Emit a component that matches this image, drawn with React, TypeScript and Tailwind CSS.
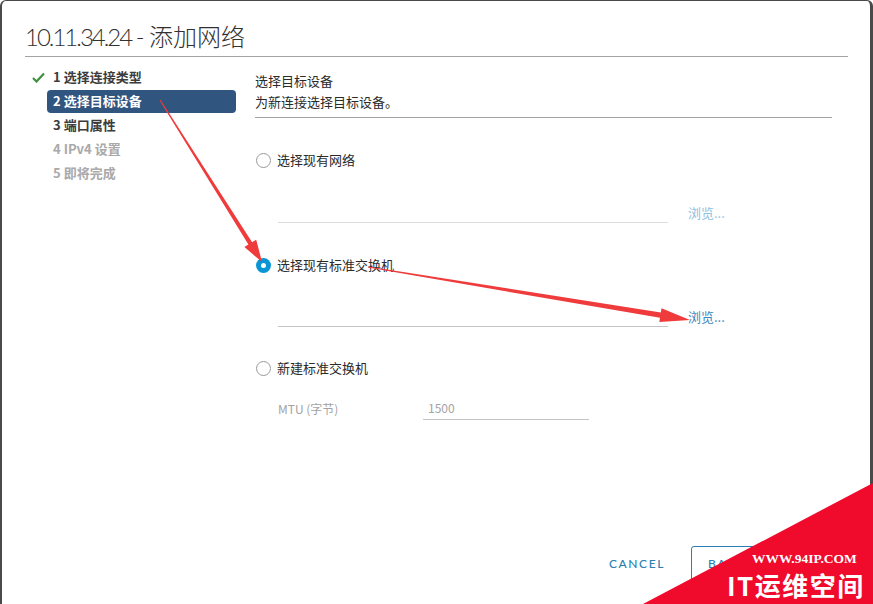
import type { ReactNode } from "react";

const cjk = "font-['Noto_Sans_CJK_SC','Noto_Sans',sans-serif]";

type Pt = [number, number];

// tapered shaft + head, returned as polygon points
const arrowPoints = (from: Pt, tip: Pt, headLen: number, headHalf: number, w0: number, w1: number) => {
  const dx = tip[0] - from[0];
  const dy = tip[1] - from[1];
  const len = Math.hypot(dx, dy);
  const ux = dx / len;
  const uy = dy / len;
  const px = -uy;
  const py = ux;
  const bx = tip[0] - ux * headLen;
  const by = tip[1] - uy * headLen;
  const pts: Pt[] = [
    [from[0] + px * w0, from[1] + py * w0],
    [bx + px * w1, by + py * w1],
    [bx + px * headHalf, by + py * headHalf],
    tip,
    [bx - px * headHalf, by - py * headHalf],
    [bx - px * w1, by - py * w1],
    [from[0] - px * w0, from[1] - py * w0],
  ];
  return pts.map((p) => `${p[0].toFixed(1)},${p[1].toFixed(1)}`).join(" ");
};

const steps = [
  { n: 1, label: "选择连接类型", state: "done" },
  { n: 2, label: "选择目标设备", state: "active" },
  { n: 3, label: "端口属性", state: "todo" },
  { n: 4, label: "IPv4 设置", state: "disabled" },
  { n: 5, label: "即将完成", state: "disabled" },
];

function Radio({ checked, children }: { checked?: boolean; children: ReactNode }) {
  return (
    <div className="flex h-[20px] items-center">
      {checked ? (
        <span className="ml-[1px] flex h-[15px] w-[15px] items-center justify-center rounded-full bg-[#0a96d4]">
          <span className="h-[5px] w-[5px] rounded-full bg-white" />
        </span>
      ) : (
        <span className="ml-[1px] h-[15px] w-[15px] rounded-full border border-[#9a9a9a] bg-white" />
      )}
      <span className="ml-[6px] text-[13px] text-[#2b2b2b]">{children}</span>
    </div>
  );
}

function BrowseRow({ enabled }: { enabled?: boolean }) {
  return (
    <div className="flex items-end pl-[23px]">
      <div
        className={
          "h-[22px] w-[390px] border-b " + (enabled ? "border-[#c4c4c4]" : "border-[#dcdcdc]")
        }
      />
      <span
        className={
          "ml-[20px] text-[13px] leading-[21px] " + (enabled ? "text-[#3a88c0]" : "text-[#8fbfdf]")
        }
      >
        浏览...
      </span>
    </div>
  );
}

export default function App() {
  return (
    <div className={"relative h-[604px] w-[873px] overflow-hidden bg-white " + cjk}>
      <div className="flex h-full flex-col rounded-t-[6px] border-l-2 border-r-[3px] border-t border-[#4a4a4a] pl-[23px] pr-[22px]">
        <div className="border-b border-[#a3a3a3] pb-[3px] pt-[20px]">
          <h1 className="font-['Lato','Noto_Sans_CJK_SC',sans-serif] text-[24px] font-light leading-[32px] text-[#313131]">
            <span className="tracking-[-2px]">10.11.34.24 -</span> 添加网络
          </h1>
        </div>

        <div className="flex pt-[8px]">
          <ul className="w-[211px]">
            {steps.map((s) => (
              <li key={s.n} className="flex h-[24px] items-center">
                <span className="flex w-[22px] justify-end pr-[2px]">
                  {s.state === "done" ? (
                    <svg width="13" height="11" viewBox="0 0 13 11">
                      <path d="M1 6 L4.5 9.5 L12 1.5" fill="none" stroke="#3f8f3f" strokeWidth="2.2" />
                    </svg>
                  ) : null}
                </span>
                <span
                  className={
                    "flex h-[23px] flex-1 items-center rounded-[4px] px-[6px] text-[13px] font-semibold " +
                    (s.state === "active"
                      ? "bg-[#30557f] text-white"
                      : s.state === "disabled"
                        ? "text-[#a9a9a9]"
                        : "text-[#3c3c3c]")
                  }
                >
                  {s.n} {s.label}
                </span>
              </li>
            ))}
          </ul>

          <div className="ml-[19px] w-[577px] pt-[5px]">
            <div className="border-b border-[#a3a3a3] pb-[5px] text-[13px] leading-[21px] text-[#2b2b2b]">
              <p>选择目标设备</p>
              <p>为新连接选择目标设备。</p>
            </div>

            <div className="mt-[32px]">
              <Radio>选择现有网络</Radio>
            </div>
            <div className="mt-[31px]">
              <BrowseRow />
            </div>
            <div className="mt-[32px]">
              <Radio checked>选择现有标准交换机</Radio>
            </div>
            <div className="mt-[30px]">
              <BrowseRow enabled />
            </div>
            <div className="mt-[31px]">
              <Radio>新建标准交换机</Radio>
            </div>
            <div className="mt-[19px] flex items-end pl-[23px] text-[12px] text-[#a3a3a3]">
              <span className="w-[145px] leading-[22px]">MTU (字节)</span>
              <span className="h-[23px] w-[166px] border-b border-[#c4c4c4] pl-[5px] leading-[22px]">
                1500
              </span>
            </div>
          </div>
        </div>

        <div className="mt-auto flex items-center justify-end pb-[22px]">
          <button className="h-[36px] px-[12px] font-['Lato',sans-serif] text-[12px] font-medium tracking-[1.6px] text-[#2a7fb0]">
            CANCEL
          </button>
          <button className="ml-[14px] h-[36px] w-[72px] rounded-[3px] border border-[#2a7fb0] font-['Lato',sans-serif] text-[12px] font-medium tracking-[1.6px] text-[#2a7fb0]">
            BACK
          </button>
          <button className="ml-[12px] h-[36px] w-[73px] rounded-[3px] bg-[#0079b8] font-['Lato',sans-serif] text-[12px] font-medium tracking-[1.6px] text-white">
            NEXT
          </button>
        </div>
      </div>

      {/* annotation arrows */}
      <svg className="pointer-events-none absolute left-0 top-0" width="873" height="604">
        <polygon points={arrowPoints([160, 100], [262, 262], 22, 7, 0.6, 2.2)} fill="#ef3b3b" />
        <polygon points={arrowPoints([368, 267], [690, 320], 30, 7, 0.6, 2.6)} fill="#ef3b3b" />
        <polygon points="873,483 873,604 643,604" fill="#f00a2b" />
      </svg>

      {/* watermark */}
      <div className="pointer-events-none absolute left-[752px] top-[552px] font-['Liberation_Serif',serif] text-[13.5px] font-bold leading-[14px] text-white">
        WWW.94IP.COM
      </div>
      <div className="pointer-events-none absolute left-[727px] top-[569px] whitespace-nowrap text-[26px] font-bold leading-[32px] tracking-[1.5px] text-white">
        IT运维空间
      </div>
    </div>
  );
}
